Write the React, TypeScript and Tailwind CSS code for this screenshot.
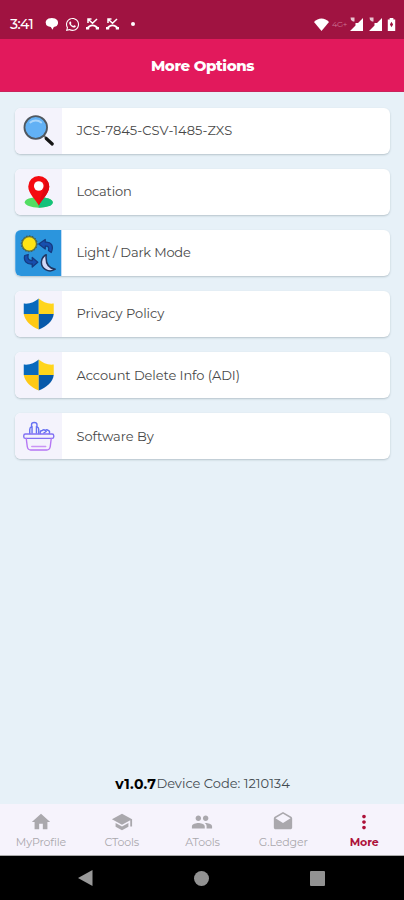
import type { ReactNode } from "react";
import { FaWhatsapp } from "react-icons/fa";
import { MdDrafts, MdHome, MdMoreVert, MdPeople, MdSchool } from "react-icons/md";

/* ---------- List icons ---------- */

function SearchIcon() {
  return (
    <svg viewBox="0 0 46 46" className="h-full w-full">
      <path d="M28 27L31 30" stroke="#777" strokeWidth="2.2" />
      <path d="M31 30.5L37 36" stroke="#151515" strokeWidth="3.2" strokeLinecap="round" />
      <circle cx="20.5" cy="19.5" r="11.3" fill="#62b1f5" stroke="#505860" strokeWidth="1.8" />
      <path d="M15 14.5C18 11.8 23 11.8 26 14.5" fill="none" stroke="#a9d6fb" strokeWidth="1.8" strokeLinecap="round" />
    </svg>
  );
}

function LocationIcon() {
  return (
    <svg viewBox="0 0 46 46" className="h-full w-full">
      <ellipse cx="23.5" cy="33.3" rx="14" ry="5.4" fill="#53dd63" />
      <path d="M23.5 28L30 28.7C40 30.5 40 36.5 30 38L23.5 38.7Z" fill="#14c17b" />
      <path d="M23.5 36.5C21 31 13 25 13 17.5A10.5 10.5 0 0 1 34 17.5C34 25 26 31 23.5 36.5Z" fill="#f50a10" />
      <path d="M23.5 36.5C26 31 34 25 34 17.5A10.5 10.5 0 0 0 30 9.5C31 20.5 25 25.5 23.5 36.5Z" fill="#df0911" />
      <circle cx="23.5" cy="17" r="4.8" fill="#fff" />
    </svg>
  );
}

function ThemeIcon() {
  return (
    <svg viewBox="0 0 46 46" className="h-full w-full">
      <rect width="46" height="46" fill="#2b95dd" />
      <circle cx="14" cy="13.8" r="7.3" fill="#ffe414" stroke="#69783a" strokeWidth="1.4" />
      <circle cx="14" cy="13.8" r="8" fill="none" stroke="#35526a" strokeWidth="1" strokeDasharray="1.5 1.6" />
      <path d="M23.5 14L30 9.5V12.2C35.5 11.5 39 15.5 36 22.5L33.2 20.5C34.2 17.5 33 15.8 30 16.2V19Z" fill="#174fae" stroke="#153a80" strokeWidth="1.3" strokeLinejoin="round" />
      <path d="M9.5 25.5L13 24.5C12 28.5 13.5 31 17 30.5V27.5L22.5 32.3L17 37V34C11 34.5 8 30.5 9.5 25.5Z" fill="#174fae" stroke="#153a80" strokeWidth="1.3" strokeLinejoin="round" />
      <path d="M31 24.8C30 33.5 33 38.2 40 39.2C33.5 43.5 25.5 38.5 26.2 31.5C26.6 28.5 28.4 26 31 24.8Z" fill="#d2d8f7" stroke="#203660" strokeWidth="1.5" strokeLinejoin="round" />
    </svg>
  );
}

function ShieldIcon() {
  return (
    <svg viewBox="0 0 46 46" className="h-full w-full">
      <path d="M23.5 7.5C19.5 11 14.5 13.2 8.5 12.5V23H23.5Z" fill="#086abd" />
      <path d="M23.5 7.5C27.5 11 32.5 13.2 38.5 12.5V23H23.5Z" fill="#ffd51c" />
      <path d="M8.5 23H23.5V38.5C15.5 35 10 30.5 8.5 23Z" fill="#fec915" />
      <path d="M23.5 23H38.5C37.5 30.5 31.5 35 23.5 38.5Z" fill="#0759aa" />
    </svg>
  );
}

function BasketIcon() {
  return (
    <svg viewBox="0 0 46 46" className="h-full w-full" fill="none" strokeWidth="1.4" strokeLinejoin="round" strokeLinecap="round">
      <g stroke="#6671f2">
        <path d="M14.5 20.5V16.5Q14.5 14.5 16.3 13.5V11.5Q16.3 9.5 19 9.5T21.7 11.5V13.5Q23.5 14.5 23.5 16.5V20.5M16.8 13.5V20M21.2 13.5V20" />
        <path d="M25 20.5Q24.5 17.5 27 17.5Q28.5 16 30 17.5Q31.5 16 33 17.5Q35 18 34 20.5M28.5 20L31 18.5" />
      </g>
      <rect x="8.5" y="21" width="30" height="4.4" rx="1.7" stroke="#8271f3" />
      <path d="M11 25.5L12 33.5Q12.5 37 15.5 37H31.5Q34.5 37 35 33.5L36 25.5" stroke="#b576f4" />
      <path d="M16.5 33.5H30.5" stroke="#ca94f5" />
    </svg>
  );
}

/* ---------- Status bar icons ---------- */

function SignalIcon() {
  return (
    <svg viewBox="0 0 13 14" className="h-3.5 w-[13px]" fill="#fff">
      <path d="M13 1V14H0L5.5 8.5V6H8Z" />
      <path d="M0.5 0.5H4.5V4.5H3L1 3Z" opacity=".75" />
    </svg>
  );
}

function MissedCallIcon() {
  return (
    <svg viewBox="0 0 15 14" className="h-[14px] w-[15px]" fill="none" stroke="#fff">
      <path d="M3 6V2H6.5M3.2 2.2L7.5 6.3L12 2" strokeWidth="1.5" />
      <path d="M1.8 11.5L4.5 9.3Q7.5 7.5 10.5 9.3L13.2 11.5" strokeWidth="1.8" />
      <path d="M1 11.2H4.2M10.8 11.2H14" strokeWidth="2.6" />
    </svg>
  );
}

function StatusBar() {
  return (
    <div className="flex h-[39px] items-start bg-[#a01341] text-white">
      <span className="mt-[15px] ml-[10px] w-[34px] text-[14px] leading-[18px] font-medium tracking-[-0.6px]">
        3:41
      </span>
      <div className="mt-[17px] ml-px flex h-[14px] items-center">
        <svg viewBox="0 0 14 14" className="h-[14px] w-[14px]" fill="#fff">
          <path d="M3.5 1.5Q7 .3 10 1.5Q13.5 3 13 6.5Q12.5 9.5 8.8 10L7.5 12.8L5.8 10L3 9.2Q.5 8 .6 5Q1 2.5 3.5 1.5Z" />
        </svg>
        <FaWhatsapp className="ml-[6px] h-[15px] w-[15px]" />
        <span className="ml-[5px] flex gap-[5px]">
          <MissedCallIcon />
          <MissedCallIcon />
        </span>
        <span className="ml-[11px] h-1 w-1 rounded-full bg-white" />
      </div>
      <div className="mt-[17px] mr-2 ml-auto flex h-[14px] items-center">
        <svg viewBox="0 0 15 13" className="h-[13px] w-[15px]" fill="#fff">
          <path d="M0 4C4-.8 11-.8 15 4L7.5 13Z" />
        </svg>
        <span className="mr-px ml-[3px] w-[17px] text-[8px] leading-2 tracking-[-0.4px] text-[#cc7594]">4G+</span>
        <SignalIcon />
        <span className="w-[6px]" />
        <SignalIcon />
        <svg viewBox="0 0 9 14" className="ml-[5px] h-[13px] w-[9px]">
          <path d="M2.5 0H6.5V1.5H8.5V14H.5V1.5H2.5Z" fill="#fff" />
          <path d="M4.5 4L6.2 7L4.5 10L2.8 7Z" fill="#a01341" />
        </svg>
      </div>
    </div>
  );
}

/* ---------- Options ---------- */

const options: { label: string; icon: ReactNode; tracking: string }[] = [
  { label: "JCS-7845-CSV-1485-ZXS", icon: <SearchIcon />, tracking: "tracking-[0.04px]" },
  { label: "Location", icon: <LocationIcon />, tracking: "tracking-[-0.15px]" },
  { label: "Light / Dark Mode", icon: <ThemeIcon />, tracking: "tracking-[-0.18px]" },
  { label: "Privacy Policy", icon: <ShieldIcon />, tracking: "tracking-[-0.05px]" },
  { label: "Account Delete Info (ADI)", icon: <ShieldIcon />, tracking: "tracking-[-0.08px]" },
  { label: "Software By", icon: <BasketIcon />, tracking: "tracking-[-0.05px]" },
];

const tabs = [
  { label: "MyProfile", Icon: MdHome },
  { label: "CTools", Icon: MdSchool },
  { label: "ATools", Icon: MdPeople },
  { label: "G.Ledger", Icon: MdDrafts },
  { label: "More", Icon: MdMoreVert, active: true },
];

export default function App() {
  return (
    <div className="flex h-[900px] w-full flex-col overflow-hidden bg-[#e7f1f8] font-[Montserrat,Inter,sans-serif]">
      <StatusBar />

      <header className="flex h-[53px] items-center justify-center border-b border-[#c9245c] bg-[#e2195c]">
        <h1 className="mt-[2px] ml-px text-[15px] font-extrabold tracking-[-0.4px] text-white">More Options</h1>
      </header>

      <main className="flex flex-1 flex-col pt-[15.5px] pr-[14px] pl-[15px]">
        <div className="flex flex-col gap-[15.2px]">
          {options.map(({ label, icon, tracking }) => (
            <button
              key={label}
              className="flex h-[46px] items-center overflow-hidden rounded-md bg-white text-left shadow-[0_1px_2px_rgba(70,90,100,0.3)]"
            >
              <span className="h-full w-[46.5px] shrink-0 bg-[#f4f3fc]">{icon}</span>
              <span className={`ml-[15px] text-[13px] whitespace-nowrap text-[#484848] ${tracking}`}>{label}</span>
            </button>
          ))}
        </div>

        <p className="mt-auto mb-[10px] flex h-5 items-center justify-center text-[13px] text-[#444b50]">
          <b className="text-[14px] tracking-[0.35px] text-black">v1.0.7</b>
          <span>Device Code: 1210134</span>
        </p>
      </main>

      {/* Bottom tabs */}
      <nav className="flex h-[52px] border-b border-[#aaa] bg-[#f6f3fc]">
        {tabs.map(({ label, Icon, active }) => (
          <div
            key={label}
            className={`flex flex-1 flex-col items-center pt-[7px] ${active ? "font-bold text-[#ad1139]" : "text-[#aaa8ad]"}`}
          >
            <Icon className="ml-px h-[22px] w-[22px]" />
            <span className="mt-[2px] ml-px text-[11px] leading-[14px] tracking-[-0.15px]">{label}</span>
          </div>
        ))}
      </nav>

      {/* System navigation */}
      <div className="flex h-11 items-center justify-between bg-black pr-[79px] pl-[78px]">
        <svg viewBox="0 0 15 16" className="h-4 w-[15px]" fill="#999">
          <path d="M0 8L14.5 0V16Z" />
        </svg>
        <span className="h-[15px] w-[15px] rounded-full bg-[#929292]" />
        <span className="h-[15px] w-[15px] rounded-[1px] bg-[#929292]" />
      </div>
    </div>
  );
}
